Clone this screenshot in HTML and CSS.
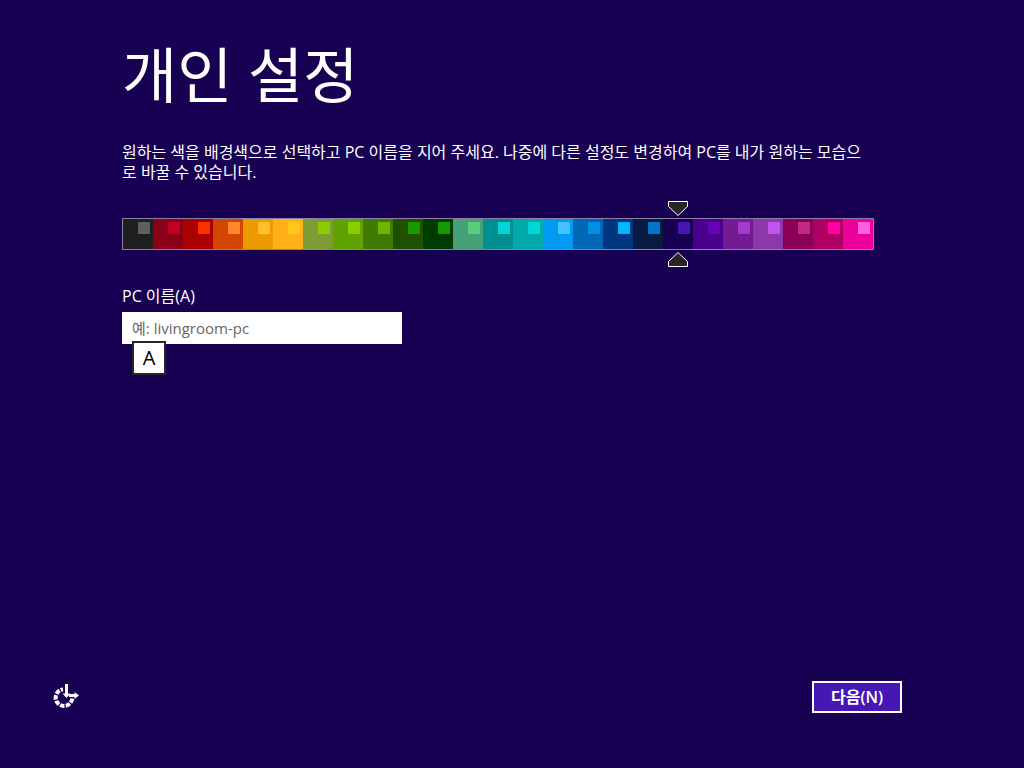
FILE: index.html
```html
<!DOCTYPE html>
<html lang="ko">
<head>
<meta charset="utf-8">
<meta name="viewport" content="width=device-width, initial-scale=1">
<title>개인 설정</title>
<link rel="stylesheet" href="styles.css">
</head>
<body>
<form class="page">
  <main class="content">
    <h1 class="title">개인 설정</h1>
    <p class="intro">원하는 색을 배경색으로 선택하고 PC 이름을 지어 주세요. 나중에 다른 설정도 변경하여 PC를 내가 원하는 모습으로 바꿀 수 있습니다.</p>
    <div class="palette" role="radiogroup" aria-label="배경색">
      <label class="swatch c01"><input type="radio" name="color" aria-label="1"></label>
      <label class="swatch c02"><input type="radio" name="color" aria-label="2"></label>
      <label class="swatch c03"><input type="radio" name="color" aria-label="3"></label>
      <label class="swatch c04"><input type="radio" name="color" aria-label="4"></label>
      <label class="swatch c05"><input type="radio" name="color" aria-label="5"></label>
      <label class="swatch c06"><input type="radio" name="color" aria-label="6"></label>
      <label class="swatch c07"><input type="radio" name="color" aria-label="7"></label>
      <label class="swatch c08"><input type="radio" name="color" aria-label="8"></label>
      <label class="swatch c09"><input type="radio" name="color" aria-label="9"></label>
      <label class="swatch c10"><input type="radio" name="color" aria-label="10"></label>
      <label class="swatch c11"><input type="radio" name="color" aria-label="11"></label>
      <label class="swatch c12"><input type="radio" name="color" aria-label="12"></label>
      <label class="swatch c13"><input type="radio" name="color" aria-label="13"></label>
      <label class="swatch c14"><input type="radio" name="color" aria-label="14"></label>
      <label class="swatch c15"><input type="radio" name="color" aria-label="15"></label>
      <label class="swatch c16"><input type="radio" name="color" aria-label="16"></label>
      <label class="swatch c17"><input type="radio" name="color" aria-label="17"></label>
      <label class="swatch c18"><input type="radio" name="color" aria-label="18"></label>
      <label class="swatch c19"><input type="radio" name="color" aria-label="19" checked>
        <svg class="marker marker-top" viewBox="0 0 20 15" aria-hidden="true"><path d="M.5.5h19v5L10 14.500.5 5.500z"/></svg>
        <svg class="marker marker-bottom" viewBox="0 0 20 15" aria-hidden="true"><path d="M.5 14.500h19v-5L10 .5.5 9.500z"/></svg>
      </label>
      <label class="swatch c20"><input type="radio" name="color" aria-label="20"></label>
      <label class="swatch c21"><input type="radio" name="color" aria-label="21"></label>
      <label class="swatch c22"><input type="radio" name="color" aria-label="22"></label>
      <label class="swatch c23"><input type="radio" name="color" aria-label="23"></label>
      <label class="swatch c24"><input type="radio" name="color" aria-label="24"></label>
      <label class="swatch c25"><input type="radio" name="color" aria-label="25"></label>
    </div>
    <div class="field">
      <label class="field-label" for="pc-name">PC 이름(A)</label>
      <input class="field-input" id="pc-name" type="text" placeholder="예: livingroom-pc" accesskey="a">
      <span class="key-tip" aria-hidden="true">A</span>
    </div>
  </main>
  <footer class="footer">
    <button class="ease" type="button" aria-label="접근성">
      <svg class="ease-icon" viewBox="0 0 26 26" aria-hidden="true">
        <path class="ring" d="M19.200 14.500A8.300 8.300 0 1 1 10 5.400"/>
        <path class="shaft" d="M13.500 0v10M16 11.500h6"/>
        <path class="head" d="M9.500 9.500h8l-4 4.500zM21.500 8l4.500 3.500-4.500 3.500z"/>
      </svg>
    </button>
    <button class="next" type="submit" accesskey="n">다음(N)</button>
  </footer>
</form>
</body>
</html>
```
FILE: styles.css
```css
* { box-sizing: border-box; }

body {
  margin: 0;
  background: #180052;
  color: #fff;
  font: 16px/20px "Open Sans", "Noto Sans CJK KR", sans-serif;
}

.page {
  display: flex;
  flex-direction: column;
  min-height: 100vh;
  padding: 40px 122px 55px 52px;
}

.content {
  flex: 1;
  padding-left: 70px;
}

.title {
  margin: 0 0 32px;
  font-size: 60px;
  font-weight: 400;
  line-height: 70px;
}

.intro {
  max-width: 750px;
  margin: 0 0 36px;
}

.palette {
  display: flex;
  max-width: 752px;
  border: 1px solid #8b7fa8;
}

.swatch {
  position: relative;
  flex: 1;
  height: 30px;
  padding: 3px;
  text-align: right;
  line-height: 0;
  background: var(--base);
}

.swatch input {
  appearance: none;
  width: 12px;
  height: 12px;
  margin: 0;
  background: var(--accent);
}

.marker {
  position: absolute;
  left: calc(50% - 10px);
  width: 20px;
  height: 15px;
  fill: #262626;
  stroke: #fff;
}

.marker-top { top: -18px; }
.marker-bottom { bottom: -18px; }

.c01 { --base: #1f1f1f; --accent: #5f5f5f; }
.c02 { --base: #8c0017; --accent: #c1001f; }
.c03 { --base: #ab0000; --accent: #fa3200; }
.c04 { --base: #d24600; --accent: #ff8a2b; }
.c05 { --base: #eb9a00; --accent: #ffc02b; }
.c06 { --base: #ffb217; --accent: #ffc919; }
.c07 { --base: #7d9c34; --accent: #8ccc00; }
.c08 { --base: #5fa300; --accent: #8ccc00; }
.c09 { --base: #417a00; --accent: #6fb400; }
.c10 { --base: #1e5000; --accent: #199900; }
.c11 { --base: #003c00; --accent: #199900; }
.c12 { --base: #46a179; --accent: #58cf80; }
.c13 { --base: #008e8e; --accent: #00d5d7; }
.c14 { --base: #00a9aa; --accent: #00d5d7; }
.c15 { --base: #009af3; --accent: #44c1ff; }
.c16 { --base: #0067b5; --accent: #0091e5; }
.c17 { --base: #003580; --accent: #00b7ff; }
.c18 { --base: #091a42; --accent: #0077cb; }
.c19 { --base: #180052; --accent: #4617b4; }
.c20 { --base: #49008d; --accent: #6800b4; }
.c21 { --base: #721b93; --accent: #a53bcc; }
.c22 { --base: #8c38ab; --accent: #c255e9; }
.c23 { --base: #8a0057; --accent: #c32983; }
.c24 { --base: #ad0062; --accent: #ff00a5; }
.c25 { --base: #ec009a; --accent: #ff5fdb; }

.field {
  position: relative;
  display: flex;
  flex-direction: column;
  align-items: flex-start;
  gap: 6px;
  max-width: 280px;
  margin-top: 36px;
}

.field-input {
  width: 100%;
  height: 32px;
  padding: 0 10px;
  border: 0;
  border-radius: 0;
  background: #fff;
  color: #222;
  font: inherit;
  font-size: 15px;
}

.field-input::placeholder { color: #666; opacity: 1; }

.key-tip {
  position: absolute;
  top: 55px;
  left: 10px;
  width: 34px;
  height: 34px;
  border: 2px solid #262626;
  background: #fff;
  color: #000;
  font-size: 20px;
  line-height: 30px;
  text-align: center;
}

.footer {
  display: flex;
  align-items: center;
  justify-content: space-between;
}

.ease {
  display: flex;
  padding: 0 1px;
  border: 0;
  background: none;
}

.ease-icon {
  width: 26px;
  height: 26px;
  fill: none;
  stroke: #fff;
}

.ease-icon .ring { stroke-width: 4; stroke-dasharray: 4.500 1.300; }
.ease-icon .shaft { stroke-width: 3; }
.ease-icon .head { fill: #fff; stroke: none; }

.next {
  min-width: 90px;
  height: 32px;
  padding: 0 16px;
  border: 2px solid #fff;
  background: #4617b4;
  color: #fff;
  font: inherit;
  font-weight: 600;
  line-height: 26px;
}
```
